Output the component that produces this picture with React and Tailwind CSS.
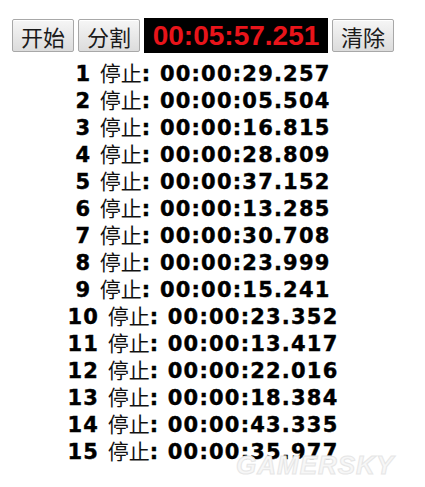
import React from 'react';

const laps = [
  '00:00:29.257',
  '00:00:05.504',
  '00:00:16.815',
  '00:00:28.809',
  '00:00:37.152',
  '00:00:13.285',
  '00:00:30.708',
  '00:00:23.999',
  '00:00:15.241',
  '00:00:23.352',
  '00:00:13.417',
  '00:00:22.016',
  '00:00:18.384',
  '00:00:43.335',
  '00:00:35.977',
];

const cjk = { fontFamily: '"Noto Sans CJK SC", sans-serif' };

function Btn({ children }) {
  return (
    <button
      className="w-[62px] h-[33px] flex items-center justify-center rounded-[2px] border border-[#a8a8a8] bg-gradient-to-b from-[#f6f6f6] to-[#dcdcdc] text-[22px] leading-none text-[#1a1a1a] shadow-[inset_0_1px_0_#fff]"
      style={cjk}
    >
      {children}
    </button>
  );
}

export default function App() {
  return (
    <div className="relative w-[425px] h-[487px] bg-white overflow-hidden">
      <div className="pt-[18px] pl-[12px]">
        <div className="w-[382px]">
          {/* controls */}
          <div className="flex items-center gap-[4px]">
            <Btn>开始</Btn>
            <Btn>分割</Btn>
            <div className="w-[184px] h-[35px] bg-black flex items-center justify-center text-[28px] font-bold leading-none text-[#e8141a] font-['Liberation_Sans',Arial,sans-serif]">
              00:05:57.251
            </div>
            <Btn>清除</Btn>
          </div>

          {/* split list */}
          <div className="mt-[8px] text-center font-['DejaVu_Sans',Verdana,sans-serif] text-[21px] font-bold leading-[27px] tracking-[1.2px] text-black">
            {laps.map((t, i) => (
              <div key={i} className="h-[27px] whitespace-nowrap">
                <span className="[-webkit-text-stroke:0.4px_#000]">{i + 1}</span>{' '}
                <span className="font-normal text-[21px] leading-none tracking-normal text-[#111]" style={cjk}>停止</span>
                <span className="[-webkit-text-stroke:0.4px_#000]">: {t}</span>
              </div>
            ))}
          </div>
        </div>
      </div>

      {/* watermark */}
      <div className="absolute left-[236px] top-[446px] text-[26px] font-bold italic tracking-[1px] text-[#f7f7f7] font-['Liberation_Sans',Arial,sans-serif] [-webkit-text-stroke:1px_#e6e6e6] select-none">
        GAMERSKY
      </div>
    </div>
  );
}
